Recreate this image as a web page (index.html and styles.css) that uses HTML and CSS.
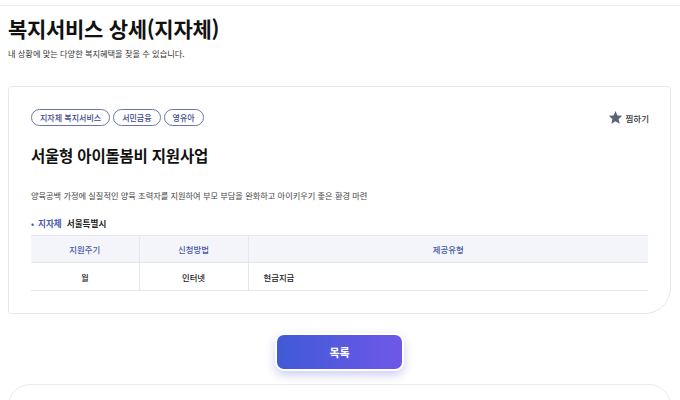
FILE: index.html
```html
<!DOCTYPE html>
<html lang="ko">
<head>
<meta charset="utf-8">
<link rel="stylesheet" href="styles.css">
</head>
<body>
<div class="page">
  <header class="head">
    <h1 class="title">복지서비스 상세(지자체)</h1>
    <p class="sub">내 상황에 맞는 다양한 복지혜택을 찾을 수 있습니다.</p>
  </header>
  <section class="card">
    <div class="top">
      <div class="tags">
        <span class="tag">지자체 복지서비스</span>
        <span class="tag">서민금융</span>
        <span class="tag">영유아</span>
      </div>
      <button class="fav"><svg width="15" height="15" viewBox="0 0 24 24"><path d="M12 1.5l3.1 7.1 7.7.6-5.9 5.1 1.8 7.6L12 17.8 5.3 21.9l1.8-7.6L1.2 9.2l7.7-.6z" fill="#5b6275"/></svg>찜하기</button>
    </div>
    <h2 class="name">서울형 아이돌봄비 지원사업</h2>
    <p class="desc">양육공백 가정에 실질적인 양육 조력자를 지원하여 부모 부담을 완화하고 아이키우기 좋은 환경 마련</p>
    <div class="org"><span class="dot">•</span><span class="org-k">지자체</span><span class="org-v">서울특별시</span></div>
    <table class="tbl">
      <thead>
        <tr><th class="c1">지원주기</th><th class="c2">신청방법</th><th>제공유형</th></tr>
      </thead>
      <tbody>
        <tr><td class="c1">월</td><td class="c2">인터넷</td><td class="left">현금지급</td></tr>
      </tbody>
    </table>
  </section>
  <div class="actions"><button class="list-btn">목록</button></div>
  <section class="card2"></section>
</div>
</body>
</html>
```
FILE: styles.css
```css
* { box-sizing: border-box; }
html, body { margin: 0; padding: 0; background: #fff; }
body {
  font-family: "Noto Sans CJK KR", "Noto Sans", sans-serif;
  color: #222;
  overflow: hidden;
  height: 400px;
}
.page {
  border-top: 1px solid #eceef1;
  margin-top: 5px;
  padding: 0 9px 0 8px;
}
.head { padding-top: 7px; }
.title {
  margin: 0;
  font-size: 21px;
  font-weight: 700;
  line-height: 30px;
  letter-spacing: -0.3px;
  color: #111;
}
.sub {
  margin: 4px 0 0;
  font-size: 8.2px;
  line-height: 12px;
  color: #333;
}
.card {
  margin-top: 27px;
  border: 1px solid #e6e8ec;
  border-radius: 4px 4px 26px 3px;
  padding: 22px 22px 22px 22px;
}
.top {
  display: flex;
  justify-content: space-between;
  align-items: center;
}
.tags { display: flex; gap: 3px; }
.tag {
  border: 1px solid #6b76a6;
  border-radius: 10px;
  color: #3d4a8f;
  font-size: 8px;
  line-height: 15px;
  padding: 0 8px;
  font-weight: 500;
}
.fav {
  display: flex;
  align-items: center;
  gap: 3px;
  background: none;
  border: 0;
  padding: 0;
  margin-right: -1px;
  font-family: inherit;
  font-size: 8.5px;
  font-weight: 500;
  color: #333;
}
.name {
  margin: 18px 0 0;
  font-size: 15.5px;
  line-height: 22px;
  font-weight: 700;
  color: #111;
  letter-spacing: -0.2px;
}
.desc {
  margin: 23px 0 0;
  font-size: 8.2px;
  line-height: 13px;
  color: #444;
}
.org {
  margin-top: 15px;
  display: flex;
  align-items: center;
  font-size: 8.6px;
  line-height: 13px;
  font-weight: 700;
}
.dot { color: #4a5bb0; margin-right: 4px; font-size: 8px; }
.org-k { color: #4a5bb0; margin-right: 5px; }
.org-v { color: #222; }
.tbl {
  margin-top: 5px;
  width: 100%;
  border-collapse: collapse;
  font-size: 8.4px;
}
.tbl th {
  background: #f3f5fa;
  color: #4a5aa8;
  font-weight: 500;
  height: 27px;
  border-top: 1px solid #e3e6ee;
  border-bottom: 1px solid #e3e6ee;
  padding: 0;
}
.tbl td {
  height: 28px;
  text-align: center;
  color: #222;
  font-weight: 500;
  border-bottom: 1px solid #e3e6ee;
  padding: 0;
}
.tbl .c1 { width: 108px; border-right: 1px solid #e3e6ee; }
.tbl .c2 { width: 109px; border-right: 1px solid #e3e6ee; }
.tbl td.left { text-align: left; padding-left: 15px; }
.actions {
  display: flex;
  justify-content: center;
  margin-top: 19px;
}
.list-btn {
  width: 129px;
  height: 38px;
  border: 2px solid #fff;
  border-radius: 9px;
  background: linear-gradient(90deg, #3f5bd6, #6f57e8);
  color: #fff;
  font-family: inherit;
  font-size: 11px;
  font-weight: 700;
  box-shadow: 0 4px 10px rgba(90, 90, 220, 0.3);
}
.card2 {
  margin-top: 13px;
  border: 1px solid #e9ebee;
  border-radius: 22px 22px 0 0;
  height: 60px;
}
```
